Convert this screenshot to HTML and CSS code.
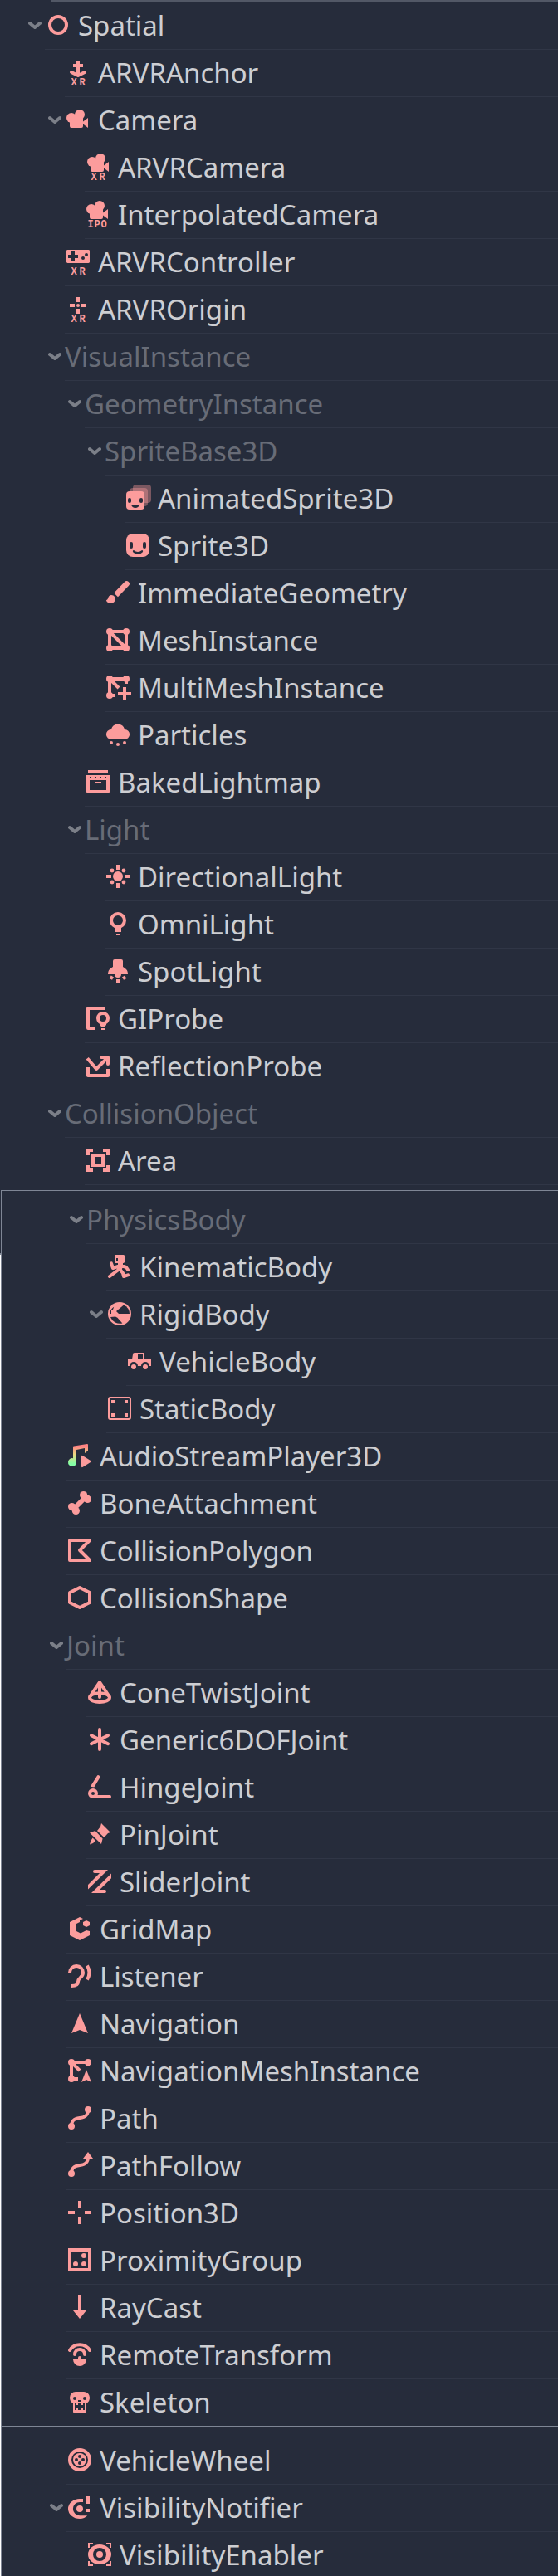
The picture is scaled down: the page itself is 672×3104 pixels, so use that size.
FILE: index.html
```html
<!DOCTYPE html>
<html lang="en">
<head>
    <meta charset="UTF-8">
    <meta name="viewport" content="width=device-width, initial-scale=1.0">
    <title>Spatial nodes</title>
    <link rel="stylesheet" href="styles.css">
</head>
<body>
    <!-- Icon sprite, 16x16 grid -->
    <svg class="sprite" aria-hidden="true">
        <defs>
            <linearGradient id="note-fill" gradientUnits="userSpaceOnUse" x1="0" y1="1" x2="0" y2="15">
                <stop offset="0.1" stop-color="#ff8484"/>
                <stop offset="0.45" stop-color="#e9d880"/>
                <stop offset="0.85" stop-color="#84ffa6"/>
            </linearGradient>
            <g id="camera-body">
                <circle cx="9" cy="5" r="3"/><circle cx="4" cy="7" r="3"/>
                <rect x="3" y="6" width="8" height="7" rx="1"/>
                <path d="M10 10l4-3v6z"/>
            </g>
            <symbol id="chevron" viewBox="0 0 16 12"><path class="chevron-line" d="M2 4l6 5 6-5"/></symbol>
            <symbol id="spatial" viewBox="0 0 16 16"><circle class="line" cx="8" cy="8" r="5"/></symbol>
            <symbol id="arvr-anchor" viewBox="0 0 16 16">
                <path d="M7 1h2v2h2v2H9v4H7V5H5V3h2z"/><path class="line" d="M4 8l4 2 4-2"/>
                <text class="tag" x="3.7 8.7" y="16">XR</text>
            </symbol>
            <symbol id="camera" viewBox="0 0 16 16"><use href="#camera-body"/></symbol>
            <symbol id="arvr-camera" viewBox="0 0 16 16">
                <use href="#camera-body" x="0.5" y="-2"/><text class="tag" x="3.7 8.7" y="16">XR</text>
            </symbol>
            <symbol id="interpolated-camera" viewBox="0 0 16 16">
                <use href="#camera-body" y="-2"/><text class="tag" x="1.7 5.7 9.7" y="16">IPO</text>
            </symbol>
            <symbol id="arvr-controller" viewBox="0 0 16 16">
                <rect x="1" y="1" width="14" height="8" rx="0.7"/>
                <path class="hole" d="M4 2h2v2h2v2H6v2H4V6H2V4h2z"/>
                <circle class="hole" cx="11" cy="6" r="1"/><circle class="hole" cx="13" cy="4" r="1"/>
                <text class="tag" x="3.7 8.7" y="16">XR</text>
            </symbol>
            <symbol id="arvr-origin" viewBox="0 0 16 16">
                <path d="M7 1h2v3H7zM3 5h3v2H3zM10 5h3v2h-3zM7 8h2v3H7z"/><circle cx="8" cy="6" r="1"/>
                <text class="tag" x="3.7 8.7" y="16">XR</text>
            </symbol>
            <symbol id="animated-sprite" viewBox="0 0 16 16">
                <rect x="5" y="0" width="11" height="11" rx="2" opacity="0.4"/>
                <rect x="3" y="2" width="11" height="11" rx="2" opacity="0.4"/>
                <rect x="1" y="4" width="11" height="11" rx="2"/>
                <rect class="hole" x="2" y="8" width="2" height="3" rx="1"/>
                <rect class="hole" x="9" y="8" width="2" height="3" rx="1"/>
                <path class="hole" d="M4 12h5q-.5 2-2.500 2t-2.500-2z"/>
            </symbol>
            <symbol id="sprite" viewBox="0 0 16 16">
                <rect x="1" y="1" width="14" height="14" rx="4"/>
                <rect class="hole" x="3" y="6" width="2" height="4" rx="1"/>
                <rect class="hole" x="11" y="6" width="2" height="4" rx="1"/>
                <path class="hole" d="M5.500 11q2.500 2 5 0q1 .3 .3 1.200q-2.800 2.500-5.600 0q-.7-.9 .3-1.200z"/>
            </symbol>
            <symbol id="immediate-geometry" viewBox="0 0 16 16">
                <path d="M12 1.600a1.600 1.600 0 0 1 2.500 2.300L8 10.600 5.600 8.300z"/>
                <path d="M4 9.500c1 0 1.600.4 2 1 1.200 2-.4 4-2.200 4C2.300 14.500 1 13.500 1 12.500c1.500-.2.800-3 3-3z"/>
            </symbol>
            <symbol id="mesh" viewBox="0 0 16 16">
                <path class="line" d="M3 3h10v10H3zl10 10"/>
                <circle cx="3" cy="3" r="2"/><circle cx="13" cy="3" r="2"/><circle cx="3" cy="13" r="2"/><circle cx="13" cy="13" r="2"/>
            </symbol>
            <symbol id="multi-mesh" viewBox="0 0 16 16">
                <path class="line butt" d="M13 6V3H3v10h3M3 3l5.500 5.500"/>
                <circle cx="3" cy="3" r="2"/><circle cx="13" cy="3" r="2"/><circle cx="3" cy="13" r="2"/>
                <path d="M11 8h2v3h3v2h-3v3h-2v-3H8v-2h3z"/>
            </symbol>
            <symbol id="particles" viewBox="0 0 16 16">
                <path d="M4 11a3 3 0 0 1-.1-6 4.200 4.200 0 0 1 8.200 0 3 3 0 0 1-.1 6z"/>
                <circle cx="4" cy="13" r="1"/><circle cx="12" cy="13" r="1"/><circle cx="8" cy="14" r="1"/>
            </symbol>
            <symbol id="lightmap" viewBox="0 0 16 16">
                <path d="M2 1h12v2H2z"/>
                <path fill-rule="evenodd" d="M1 4h14v10a1 1 0 0 1-1 1H2a1 1 0 0 1-1-1zM3 5v1h1V5zM6 5v1h1V5zM9 5v1h1V5zM12 5v1h1V5zM3 7v6h10V7z"/>
                <path d="M6 8h4v1H6z"/>
            </symbol>
            <symbol id="directional-light" viewBox="0 0 16 16">
                <circle cx="8" cy="8" r="3"/><path d="M7 1h2v3H7zM7 12h2v3H7zM1 7h3v2H1zM12 7h3v2h-3z"/>
                <circle cx="4.500" cy="4.500" r="1.200"/><circle cx="11.500" cy="4.500" r="1.200"/>
                <circle cx="4.500" cy="11.500" r="1.200"/><circle cx="11.500" cy="11.500" r="1.200"/>
            </symbol>
            <symbol id="omni-light" viewBox="0 0 16 16">
                <circle class="line" cx="8" cy="6" r="4"/><path d="M6 9.500h4V13H6zM7 14h2v1H7z"/>
            </symbol>
            <symbol id="spot-light" viewBox="0 0 16 16">
                <path d="M6 1h4a1 1 0 0 1 1 1v3.500a6 5 0 0 1 3 4.500h-4a2 2 0 0 1-4 0H2a6 5 0 0 1 3-4.500V2a1 1 0 0 1 1-1z"/>
                <path d="M7 13h2v2H7zM3.900 10.800l1.600.9-1 1.700-1.700-.9zM12.100 10.800l-1.600.9 1 1.700 1.700-.9z"/>
            </symbol>
            <symbol id="gi-probe" viewBox="0 0 16 16">
                <path d="M2 1h10v2H3v10h3v2H2a1 1 0 0 1-1-1V2a1 1 0 0 1 1-1z"/>
                <circle class="line" cx="11" cy="8" r="3"/><path d="M9 10.500h4V12l-1 1h-2l-1-1zM10 14h2v1h-2z"/>
            </symbol>
            <symbol id="reflection-probe" viewBox="0 0 16 16">
                <path class="line butt" d="M2 9v5h12v-4M1.600 3.600L7 10l7-7"/><path class="line" d="M10 3h4v4"/>
            </symbol>
            <symbol id="area" viewBox="0 0 16 16">
                <path d="M1 1h4v2H3v2H1zM11 1h4v4h-2V3h-2zM1 11h2v2h2v2H1zM13 11h2v4h-4v-2h2z"/>
                <path fill-rule="evenodd" d="M4 4h8v8H4zM6 6v4h4V6z"/>
            </symbol>
            <symbol id="kinematic-body" viewBox="0 0 16 16">
                <rect x="5" y="1" width="6" height="5" rx="0.7"/><path class="hole" d="M6 3h1v2H6z"/>
                <path class="line" d="M3 6.200L4 9l3-1h3.500l1.500.5 1 1.500M2 14l6-4.500 2 2.500.500 2 2.500-.8"/>
                <path d="M7 6h3v2l-1 3H7z"/>
            </symbol>
            <symbol id="rigid-body" viewBox="0 0 16 16">
                <circle cx="8" cy="8" r="7"/>
                <path class="hole" d="M10.500 2.700A6 6 0 0 1 14 8H7.500L6 6.500z"/>
                <path class="hole" d="M2.500 10l3-.3 1.200.7 3 3.300A6 6 0 0 1 2.500 10z"/>
                <path class="hole" d="M4.600 3.900L4 5.500 3 6v2H2a6 6 0 0 1 2.600-4.100z"/>
            </symbol>
            <symbol id="vehicle-body" viewBox="0 0 16 16">
                <path fill-rule="evenodd" d="M5 3h6v4h4v4h-1a2.500 2.500 0 0 0-5 0H7a2.500 2.500 0 0 0-5 0H1V7h2.500L4 4a1 1 0 0 1 1-1zM7 4v2.500h3V4z"/>
                <circle cx="4.500" cy="11.500" r="1.500"/><circle cx="11.500" cy="11.500" r="1.500"/>
            </symbol>
            <symbol id="static-body" viewBox="0 0 16 16">
                <rect class="line thin" x="1.500" y="1.500" width="13" height="13" rx="1"/>
                <path d="M3 3h2v2H3zM11 3h2v2h-2zM3 11h2v2H3zM11 11h2v2h-2z"/>
            </symbol>
            <symbol id="audio-player" viewBox="0 0 16 16">
                <path fill="url(#note-fill)" d="M4 2.800Q4 2.400 4.500 2.300L12.500 1q.5 0 .5.500V5l-2 1.500V3.500L6 4.500V12a2.500 2.500 0 1 1-2-2.400z"/>
                <path d="M9 8.500q0-.9.900-.4l4.800 3q.6.400 0 .8l-4.800 3q-.9.500-.9-.4z"/>
            </symbol>
            <symbol id="bone" viewBox="0 0 16 16">
                <path class="line bone-line" d="M11 5l-6 6"/>
                <circle cx="10.300" cy="3.300" r="2.300"/><circle cx="12.700" cy="5.700" r="2.300"/>
                <circle cx="3.300" cy="10.300" r="2.300"/><circle cx="5.700" cy="12.700" r="2.300"/>
            </symbol>
            <symbol id="collision-polygon" viewBox="0 0 16 16"><path class="line" d="M2 2h12L8 8l6 6H2z"/></symbol>
            <symbol id="collision-shape" viewBox="0 0 16 16"><path class="line" d="M8 2l6 3v6l-6 3-6-3V5z"/></symbol>
            <symbol id="cone-joint" viewBox="0 0 16 16">
                <ellipse class="line" cx="8" cy="11.300" rx="6" ry="2.700"/>
                <path class="line" d="M2.300 10.500L8 2l5.700 8.500M8 2v9"/>
            </symbol>
            <symbol id="generic-joint" viewBox="0 0 16 16"><path class="line" d="M8 2v12M3 5.600l10 5M3 10.600l10-5"/></symbol>
            <symbol id="hinge-joint" viewBox="0 0 16 16">
                <circle class="line" cx="4" cy="12" r="2"/><path class="line" d="M4 14h10"/>
                <path d="M6.300 1.600a1 1 0 0 1 1.800 1L4.700 8.200 2.400 7.900z"/>
            </symbol>
            <symbol id="pin-joint" viewBox="0 0 16 16">
                <path d="M9 1.500L14.500 7l-1.500.5-2.300 2.500-4.200-4 2-2.500zM5.300 6l4.500 4.700L9 14 2 7.300zM3.800 10.300l1.700 1.700L4 13.500l-2 .7.700-2.200z"/>
            </symbol>
            <symbol id="slider-joint" viewBox="0 0 16 16">
                <path d="M5 1h8L1 12.800V10l7-7H5a1 1 0 0 1 0-2zM15 3.300v2.800L8 13h3a1 1 0 0 1 0 2H3z"/>
            </symbol>
            <symbol id="grid-map" viewBox="0 0 16 16">
                <path d="M8 1L2 4v8l6 3 6-3v-2.500L12 9l-3.500 1.700L6 9.500V5l2-1V3l2-1z"/>
                <path d="M12 3l2 1v2l-2 1-2-1V4z"/>
            </symbol>
            <symbol id="listener" viewBox="0 0 16 16">
                <path class="line butt" d="M2 6a4 4 0 0 1 8 0c0 3-3 3-3 5.500 0 1.700-1 2.500-4 2.500M12.500 1.800q2.500 4.200 0 8.400"/>
            </symbol>
            <symbol id="navigation" viewBox="0 0 16 16"><path d="M8 2l5 12-5-2-5 2z"/></symbol>
            <symbol id="navigation-mesh" viewBox="0 0 16 16">
                <path class="line butt" d="M3 13h4M13 5V3H3v10M3 3l5 5"/>
                <circle cx="3" cy="3" r="2"/><circle cx="13" cy="3" r="2"/><circle cx="3" cy="13" r="2"/>
                <path d="M12 7.500l3 7.500-3-1.500L9 15z"/>
            </symbol>
            <symbol id="path" viewBox="0 0 16 16">
                <path class="line" d="M3 13c0-4 2.500-4.700 5-5s5-1 5-5"/><circle cx="13" cy="3" r="2"/><circle cx="3" cy="13" r="2"/>
            </symbol>
            <symbol id="path-follow" viewBox="0 0 16 16">
                <path class="line butt" d="M3 13c0-4 2.500-4.700 5-5s5-1 5-5"/><path d="M13 0l3 4h-6z"/><circle cx="3" cy="13" r="2"/>
            </symbol>
            <symbol id="position" viewBox="0 0 16 16"><path d="M7 1h2v4H7zM7 11h2v4H7zM1 7h4v2H1zM11 7h4v2h-4z"/></symbol>
            <symbol id="proximity-group" viewBox="0 0 16 16">
                <path fill-rule="evenodd" d="M1 1h14v14H1zM3 3v10h10V3z"/>
                <circle cx="10.500" cy="5.500" r="1.500"/><circle cx="5.500" cy="10.500" r="1.500"/><circle cx="10.500" cy="10.500" r="1.500"/>
            </symbol>
            <symbol id="ray-cast" viewBox="0 0 16 16"><path d="M7 1h2v9h3l-4 5-4-5h3z"/></symbol>
            <symbol id="remote-transform" viewBox="0 0 16 16">
                <path class="line" d="M2 5.500a7 7 0 0 1 12 0M5 8a3 3 0 0 1 6 0"/>
                <path d="M4 11h3v-1a1 1 0 0 1 2 0v1h3a4 4 0 0 1-8 0z"/>
            </symbol>
            <symbol id="skeleton" viewBox="0 0 16 16">
                <path d="M5.500 2h5A3.500 3.500 0 0 1 14 5.500q0 2.500-2 3.500v5a1 1 0 0 1-1 1H5a1 1 0 0 1-1-1V9Q2 8 2 5.500A3.500 3.500 0 0 1 5.500 2z"/>
                <circle class="hole" cx="5" cy="6" r="1"/><circle class="hole" cx="11" cy="6" r="1"/>
                <path class="hole" d="M7 7h2v1H7zM5 9h1v1h1V9h2v1h1V9h1v4h-1v-1H9v1H7v-1H6v1H5z"/>
            </symbol>
            <symbol id="vehicle-wheel" viewBox="0 0 16 16">
                <circle class="line" cx="8" cy="8" r="6"/><circle cx="8" cy="8" r="4"/>
                <circle class="hole" cx="8" cy="6" r="1"/><circle class="hole" cx="8" cy="10" r="1"/>
                <circle class="hole" cx="6" cy="8" r="1"/><circle class="hole" cx="10" cy="8" r="1"/>
            </symbol>
            <symbol id="visibility-notifier" viewBox="0 0 16 16">
                <path d="M10 3H8a7 6 0 0 0 0 12c2 0 3.500-.7 4.600-1.900H8A4 4 0 0 1 8 5h2zM12 1h2v5h-2zM12 9h2v2h-2z"/>
                <circle cx="8" cy="9" r="2"/>
            </symbol>
            <symbol id="visibility-enabler" viewBox="0 0 16 16">
                <path d="M1 1h3v1H2v2H1zM12 1h3v3h-1V2h-2zM1 12h1v2h2v1H1zM14 12h1v3h-3v-1h2z"/>
                <ellipse cx="8" cy="8" rx="7" ry="6"/><circle class="hole" cx="8" cy="8" r="4"/><circle cx="8" cy="8" r="2"/>
            </symbol>
        </defs>
    </svg>

    <main>
        <section class="panel">
            <div class="panel-edge"></div>
            <div class="divider root"></div>
            <ul class="tree">
                <li class="row"><button class="toggle" aria-label="Collapse Spatial"><svg><use href="#chevron"/></svg></button><div class="node"><svg class="icon"><use href="#spatial"/></svg><span>Spatial</span></div></li>
                <li class="row level-1"><div class="node"><svg class="icon"><use href="#arvr-anchor"/></svg><span>ARVRAnchor</span></div></li>
                <li class="row level-1"><button class="toggle" aria-label="Collapse Camera"><svg><use href="#chevron"/></svg></button><div class="node"><svg class="icon"><use href="#camera"/></svg><span>Camera</span></div></li>
                <li class="row level-2"><div class="node"><svg class="icon"><use href="#arvr-camera"/></svg><span>ARVRCamera</span></div></li>
                <li class="row level-2"><div class="node"><svg class="icon"><use href="#interpolated-camera"/></svg><span>InterpolatedCamera</span></div></li>
                <li class="row level-1"><div class="node"><svg class="icon"><use href="#arvr-controller"/></svg><span>ARVRController</span></div></li>
                <li class="row level-1"><div class="node"><svg class="icon"><use href="#arvr-origin"/></svg><span>ARVROrigin</span></div></li>
                <li class="row level-1"><button class="toggle" aria-label="Collapse VisualInstance"><svg><use href="#chevron"/></svg></button><div class="node abstract"><span>VisualInstance</span></div></li>
                <li class="row level-2"><button class="toggle" aria-label="Collapse GeometryInstance"><svg><use href="#chevron"/></svg></button><div class="node abstract"><span>GeometryInstance</span></div></li>
                <li class="row level-3"><button class="toggle" aria-label="Collapse SpriteBase3D"><svg><use href="#chevron"/></svg></button><div class="node abstract"><span>SpriteBase3D</span></div></li>
                <li class="row level-4"><div class="node"><svg class="icon"><use href="#animated-sprite"/></svg><span>AnimatedSprite3D</span></div></li>
                <li class="row level-4"><div class="node"><svg class="icon"><use href="#sprite"/></svg><span>Sprite3D</span></div></li>
                <li class="row level-3"><div class="node"><svg class="icon"><use href="#immediate-geometry"/></svg><span>ImmediateGeometry</span></div></li>
                <li class="row level-3"><div class="node"><svg class="icon"><use href="#mesh"/></svg><span>MeshInstance</span></div></li>
                <li class="row level-3"><div class="node"><svg class="icon"><use href="#multi-mesh"/></svg><span>MultiMeshInstance</span></div></li>
                <li class="row level-3"><div class="node"><svg class="icon"><use href="#particles"/></svg><span>Particles</span></div></li>
                <li class="row level-2"><div class="node"><svg class="icon"><use href="#lightmap"/></svg><span>BakedLightmap</span></div></li>
                <li class="row level-2"><button class="toggle" aria-label="Collapse Light"><svg><use href="#chevron"/></svg></button><div class="node abstract"><span>Light</span></div></li>
                <li class="row level-3"><div class="node"><svg class="icon"><use href="#directional-light"/></svg><span>DirectionalLight</span></div></li>
                <li class="row level-3"><div class="node"><svg class="icon"><use href="#omni-light"/></svg><span>OmniLight</span></div></li>
                <li class="row level-3"><div class="node"><svg class="icon"><use href="#spot-light"/></svg><span>SpotLight</span></div></li>
                <li class="row level-2"><div class="node"><svg class="icon"><use href="#gi-probe"/></svg><span>GIProbe</span></div></li>
                <li class="row level-2"><div class="node"><svg class="icon"><use href="#reflection-probe"/></svg><span>ReflectionProbe</span></div></li>
                <li class="row level-1"><button class="toggle" aria-label="Collapse CollisionObject"><svg><use href="#chevron"/></svg></button><div class="node abstract"><span>CollisionObject</span></div></li>
                <li class="row level-2"><div class="node"><svg class="icon"><use href="#area"/></svg><span>Area</span></div></li>
            </ul>
        </section>

        <div class="frame">
            <section class="panel panel-physics">
                <ul class="tree">
                    <li class="row level-2"><button class="toggle" aria-label="Collapse PhysicsBody"><svg><use href="#chevron"/></svg></button><div class="node abstract"><span>PhysicsBody</span></div></li>
                    <li class="row level-3"><div class="node"><svg class="icon"><use href="#kinematic-body"/></svg><span>KinematicBody</span></div></li>
                    <li class="row level-3"><button class="toggle" aria-label="Collapse RigidBody"><svg><use href="#chevron"/></svg></button><div class="node"><svg class="icon"><use href="#rigid-body"/></svg><span>RigidBody</span></div></li>
                    <li class="row level-4"><div class="node"><svg class="icon"><use href="#vehicle-body"/></svg><span>VehicleBody</span></div></li>
                    <li class="row level-3"><div class="node"><svg class="icon"><use href="#static-body"/></svg><span>StaticBody</span></div></li>
                    <li class="row level-1"><div class="node"><svg class="icon"><use href="#audio-player"/></svg><span>AudioStreamPlayer3D</span></div></li>
                    <li class="row level-1"><div class="node"><svg class="icon"><use href="#bone"/></svg><span>BoneAttachment</span></div></li>
                    <li class="row level-1"><div class="node"><svg class="icon"><use href="#collision-polygon"/></svg><span>CollisionPolygon</span></div></li>
                    <li class="row level-1"><div class="node"><svg class="icon"><use href="#collision-shape"/></svg><span>CollisionShape</span></div></li>
                    <li class="row level-1"><button class="toggle" aria-label="Collapse Joint"><svg><use href="#chevron"/></svg></button><div class="node abstract"><span>Joint</span></div></li>
                    <li class="row level-2"><div class="node"><svg class="icon"><use href="#cone-joint"/></svg><span>ConeTwistJoint</span></div></li>
                    <li class="row level-2"><div class="node"><svg class="icon"><use href="#generic-joint"/></svg><span>Generic6DOFJoint</span></div></li>
                    <li class="row level-2"><div class="node"><svg class="icon"><use href="#hinge-joint"/></svg><span>HingeJoint</span></div></li>
                    <li class="row level-2"><div class="node"><svg class="icon"><use href="#pin-joint"/></svg><span>PinJoint</span></div></li>
                    <li class="row level-2"><div class="node"><svg class="icon"><use href="#slider-joint"/></svg><span>SliderJoint</span></div></li>
                    <li class="row level-1"><div class="node"><svg class="icon"><use href="#grid-map"/></svg><span>GridMap</span></div></li>
                    <li class="row level-1"><div class="node"><svg class="icon"><use href="#listener"/></svg><span>Listener</span></div></li>
                    <li class="row level-1"><div class="node"><svg class="icon"><use href="#navigation"/></svg><span>Navigation</span></div></li>
                    <li class="row level-1"><div class="node"><svg class="icon"><use href="#navigation-mesh"/></svg><span>NavigationMeshInstance</span></div></li>
                    <li class="row level-1"><div class="node"><svg class="icon"><use href="#path"/></svg><span>Path</span></div></li>
                    <li class="row level-1"><div class="node"><svg class="icon"><use href="#path-follow"/></svg><span>PathFollow</span></div></li>
                    <li class="row level-1"><div class="node"><svg class="icon"><use href="#position"/></svg><span>Position3D</span></div></li>
                    <li class="row level-1"><div class="node"><svg class="icon"><use href="#proximity-group"/></svg><span>ProximityGroup</span></div></li>
                    <li class="row level-1"><div class="node"><svg class="icon"><use href="#ray-cast"/></svg><span>RayCast</span></div></li>
                    <li class="row level-1"><div class="node"><svg class="icon"><use href="#remote-transform"/></svg><span>RemoteTransform</span></div></li>
                    <li class="row level-1"><div class="node"><svg class="icon"><use href="#skeleton"/></svg><span>Skeleton</span></div></li>
                </ul>
            </section>

            <section class="panel panel-visibility">
                <div class="divider"></div>
                <ul class="tree">
                    <li class="row level-1"><div class="node"><svg class="icon"><use href="#vehicle-wheel"/></svg><span>VehicleWheel</span></div></li>
                    <li class="row level-1"><button class="toggle" aria-label="Collapse VisibilityNotifier"><svg><use href="#chevron"/></svg></button><div class="node"><svg class="icon"><use href="#visibility-notifier"/></svg><span>VisibilityNotifier</span></div></li>
                    <li class="row level-2"><div class="node"><svg class="icon"><use href="#visibility-enabler"/></svg><span>VisibilityEnabler</span></div></li>
                </ul>
            </section>
        </div>
    </main>
</body>
</html>
```
FILE: styles.css
```css
:root {
    --color-background: #262c3b;
    --color-line: #303646;
    --color-border: #7f8695;
    --color-edge: #525866;
    --color-text: #cdced2;
    --color-muted: #686c77;
    --color-arrow: #7b7f88;
    --color-icon: #fc9c9c;
    --indent: 24px;
}

* {
    margin: 0;
    padding: 0;
    box-sizing: border-box;
}

body {
    font-family: 'Noto Sans', sans-serif;
    font-size: 33px;
    line-height: 50px;
    font-variant-ligatures: none;
    background: var(--color-background);
    color: var(--color-text);
}

/* kept rendered, display: none would drop the gradient */
.sprite {
    display: block;
    width: 0;
    height: 0;
}

/* Panels */
.panel {
    background: var(--color-background);
    padding-bottom: 6px;
}

.panel-edge {
    height: 2px;
    margin-left: 62px;
    background: var(--color-edge);
}

.divider {
    height: 1px;
    margin-left: 78px;
    background: var(--color-line);
}

.divider.root {
    margin-left: 30px;
}

.frame {
    padding-left: 1px;
    background: linear-gradient(var(--color-background) 76px, var(--color-border) 76px, var(--color-border) 78px, #ffffff 78px);
}

.frame .panel {
    border-left: 1px solid var(--color-border);
    border-top: 1px solid var(--color-border);
    padding-bottom: 0;
}

.panel-physics {
    padding-top: 7px;
}

.panel-visibility {
    padding-top: 12px;
}

/* Tree */
.tree {
    list-style: none;
}

.row {
    --level: 0;
    display: flex;
    padding-left: calc(30px + var(--indent) * var(--level));
}

.level-1 { --level: 1; }
.level-2 { --level: 2; }
.level-3 { --level: 3; }
.level-4 { --level: 4; }

.toggle {
    display: flex;
    align-items: center;
    justify-content: center;
    width: 24px;
    padding-bottom: 3px;
    border: none;
    background: none;
    cursor: pointer;
}

.toggle svg {
    width: 16px;
    height: 12px;
}

.node {
    flex: 1;
    display: flex;
    align-items: center;
    gap: 8px;
    padding: 3px 0;
    border-bottom: 1px solid var(--color-line);
    white-space: nowrap;
}

/* leaf rows keep the toggle column empty */
.node:first-child {
    margin-left: 24px;
}

.frame .row:last-child .node {
    border-bottom: none;
}

.panel-visibility .row:last-child .node {
    padding-bottom: 0;
}

.abstract {
    color: var(--color-muted);
}

/* Icons */
.icon {
    flex: none;
    width: 32px;
    height: 32px;
    margin-bottom: 2px;
    fill: var(--color-icon);
}

.line {
    fill: none;
    stroke: var(--color-icon);
    stroke-width: 2;
    stroke-linecap: round;
    stroke-linejoin: round;
}

.butt {
    stroke-linecap: butt;
}

.thin {
    stroke-width: 1;
}

.bone-line {
    stroke-width: 3;
}

.hole {
    fill: var(--color-background);
}

.chevron-line {
    fill: none;
    stroke: var(--color-arrow);
    stroke-width: 4;
    stroke-linecap: round;
    stroke-linejoin: round;
}

.tag {
    font: bold 6px 'Liberation Mono', monospace;
}
```
